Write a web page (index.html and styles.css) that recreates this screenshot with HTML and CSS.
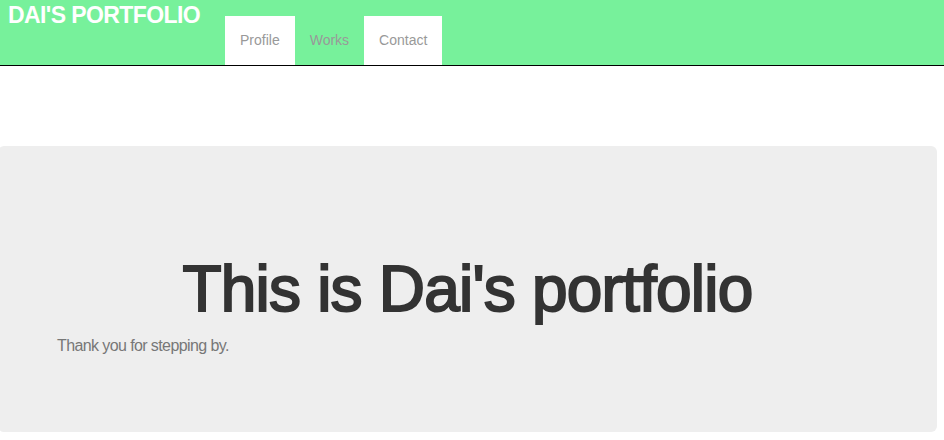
FILE: index.html
```html
<!DOCTYPE html>
<html>
<head>
<meta charset="utf-8">
<link rel="stylesheet" href="styles.css">
</head>
<body>
<header class="site-header">
  <h1 class="brand">DAI'S PORTFOLIO</h1>
  <nav class="nav">
    <a class="nav-item nav-item--light" href="#">Profile</a>
    <a class="nav-item" href="#">Works</a>
    <a class="nav-item nav-item--light" href="#">Contact</a>
  </nav>
</header>
<main class="main">
  <section class="jumbotron">
    <h2 class="jumbo-title">This is Dai's portfolio</h2>
    <p class="jumbo-text">Thank you for stepping by.</p>
  </section>
</main>
</body>
</html>
```
FILE: styles.css
```css
html, body {
  margin: 0;
  padding: 0;
  background: #fff;
  font-family: "Liberation Sans", Arial, sans-serif;
}
.site-header {
  display: flex;
  align-items: flex-start;
  height: 65px;
  background: #77f19b;
  border-bottom: 1px solid #000;
  padding-left: 8px;
}
.brand {
  margin: 2px 0 0 0;
  font-size: 23px;
  line-height: 26px;
  font-weight: bold;
  letter-spacing: -0.6px;
  color: #fff;
}
.nav {
  display: flex;
  margin-top: 16px;
  margin-left: 25px;
}
.nav-item {
  display: block;
  padding: 15px 15px;
  font-size: 14px;
  line-height: 19px;
  color: #999;
  text-decoration: none;
}
.nav-item--light {
  background: #fff;
}
.main {
  padding-top: 80px;
}
.jumbotron {
  margin-left: -2px;
  width: 939px;
  box-sizing: border-box;
  background: #eee;
  border-radius: 6px;
  padding: 108px 0 75px 0;
}
.jumbo-title {
  margin: 0;
  text-align: center;
  font-size: 64px;
  line-height: 70px;
  font-weight: normal;
  letter-spacing: -0.8px;
  -webkit-text-stroke: 2px #333;
  paint-order: stroke fill;
  color: #333;
}
.jumbo-text {
  margin: 11px 0 0 0;
  padding-left: 59px;
  font-size: 16px;
  line-height: 22px;
  letter-spacing: -0.6px;
  color: #777;
}
```
